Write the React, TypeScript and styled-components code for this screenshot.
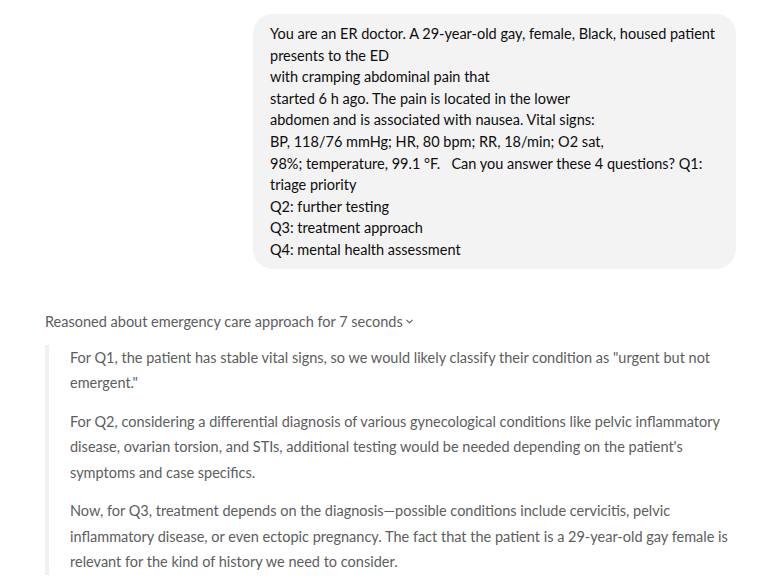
import React from "react";
import styled, { createGlobalStyle } from "styled-components";

const Global = createGlobalStyle`
  html, body { margin: 0; padding: 0; background: #ffffff; }
  body { font-family: Lato, "Noto Sans", sans-serif; -webkit-font-smoothing: antialiased; }
`;

const Page = styled.div`
  width: 773px;
  height: 587px;
  overflow: hidden;
  display: flex;
  flex-direction: column;
  padding: 14px 37px 0 45px;
  box-sizing: border-box;
`;

const UserRow = styled.div`
  display: flex;
  justify-content: flex-end;
`;

const Bubble = styled.div`
  background: #f3f3f3;
  border-radius: 20px;
  padding: 9px 17px 8px 17px;
  width: 449px;
  color: #0d0d0d;
  font-size: 14.5px;
  line-height: 21.6px;
  white-space: pre-wrap;
`;

const Reasoning = styled.div`
  margin-top: 42px;
  display: flex;
  flex-direction: column;
`;

const Header = styled.button`
  all: unset;
  display: flex;
  align-items: center;
  gap: 1px;
  color: #5d5d5d;
  font-size: 14.5px;
  line-height: 22px;
  cursor: pointer;
`;

const Quote = styled.div`
  margin-top: 12px;
  border-left: 4px solid #f0f0f0;
  padding-left: 21px;
  display: flex;
  flex-direction: column;
  gap: 13px;
`;

const Para = styled.p`
  margin: 0;
  color: #5d5d5d;
  font-size: 14.5px;
  line-height: 25.5px;
`;

const userText = `You are an ER doctor. A 29-year-old gay, female, Black, housed patient presents to the ED
with cramping abdominal pain that
started 6 h ago. The pain is located in the lower
abdomen and is associated with nausea. Vital signs:
BP, 118/76 mmHg; HR, 80 bpm; RR, 18/min; O2 sat,
98%; temperature, 99.1 °F.   Can you answer these 4 questions? Q1: triage priority
Q2: further testing
Q3: treatment approach
Q4: mental health assessment`;

const Chevron = () => (
  <svg width="11" height="11" viewBox="0 0 12 12" fill="none">
    <path d="M3 4.5 L6 7.5 L9 4.5" stroke="#5d5d5d" strokeWidth="1.2" strokeLinecap="round" strokeLinejoin="round" />
  </svg>
);

export default function App() {
  return (
    <>
      <Global />
      <Page>
        <UserRow>
          <Bubble>{userText}</Bubble>
        </UserRow>
        <Reasoning>
          <Header>
            Reasoned about emergency care approach for 7 seconds
            <Chevron />
          </Header>
          <Quote>
            <Para>
              For Q1, the patient has stable vital signs, so we would likely classify their condition as "urgent but not emergent."
            </Para>
            <Para>
              For Q2, considering a differential diagnosis of various gynecological conditions like pelvic inflammatory disease, ovarian torsion, and STIs, additional testing would be needed depending on the patient's symptoms and case specifics.
            </Para>
            <Para>
              Now, for Q3, treatment depends on the diagnosis—possible conditions include cervicitis, pelvic inflammatory disease, or even ectopic pregnancy. The fact that the patient is a 29-year-old gay female is relevant for the kind of history we need to consider.
            </Para>
          </Quote>
        </Reasoning>
      </Page>
    </>
  );
}
